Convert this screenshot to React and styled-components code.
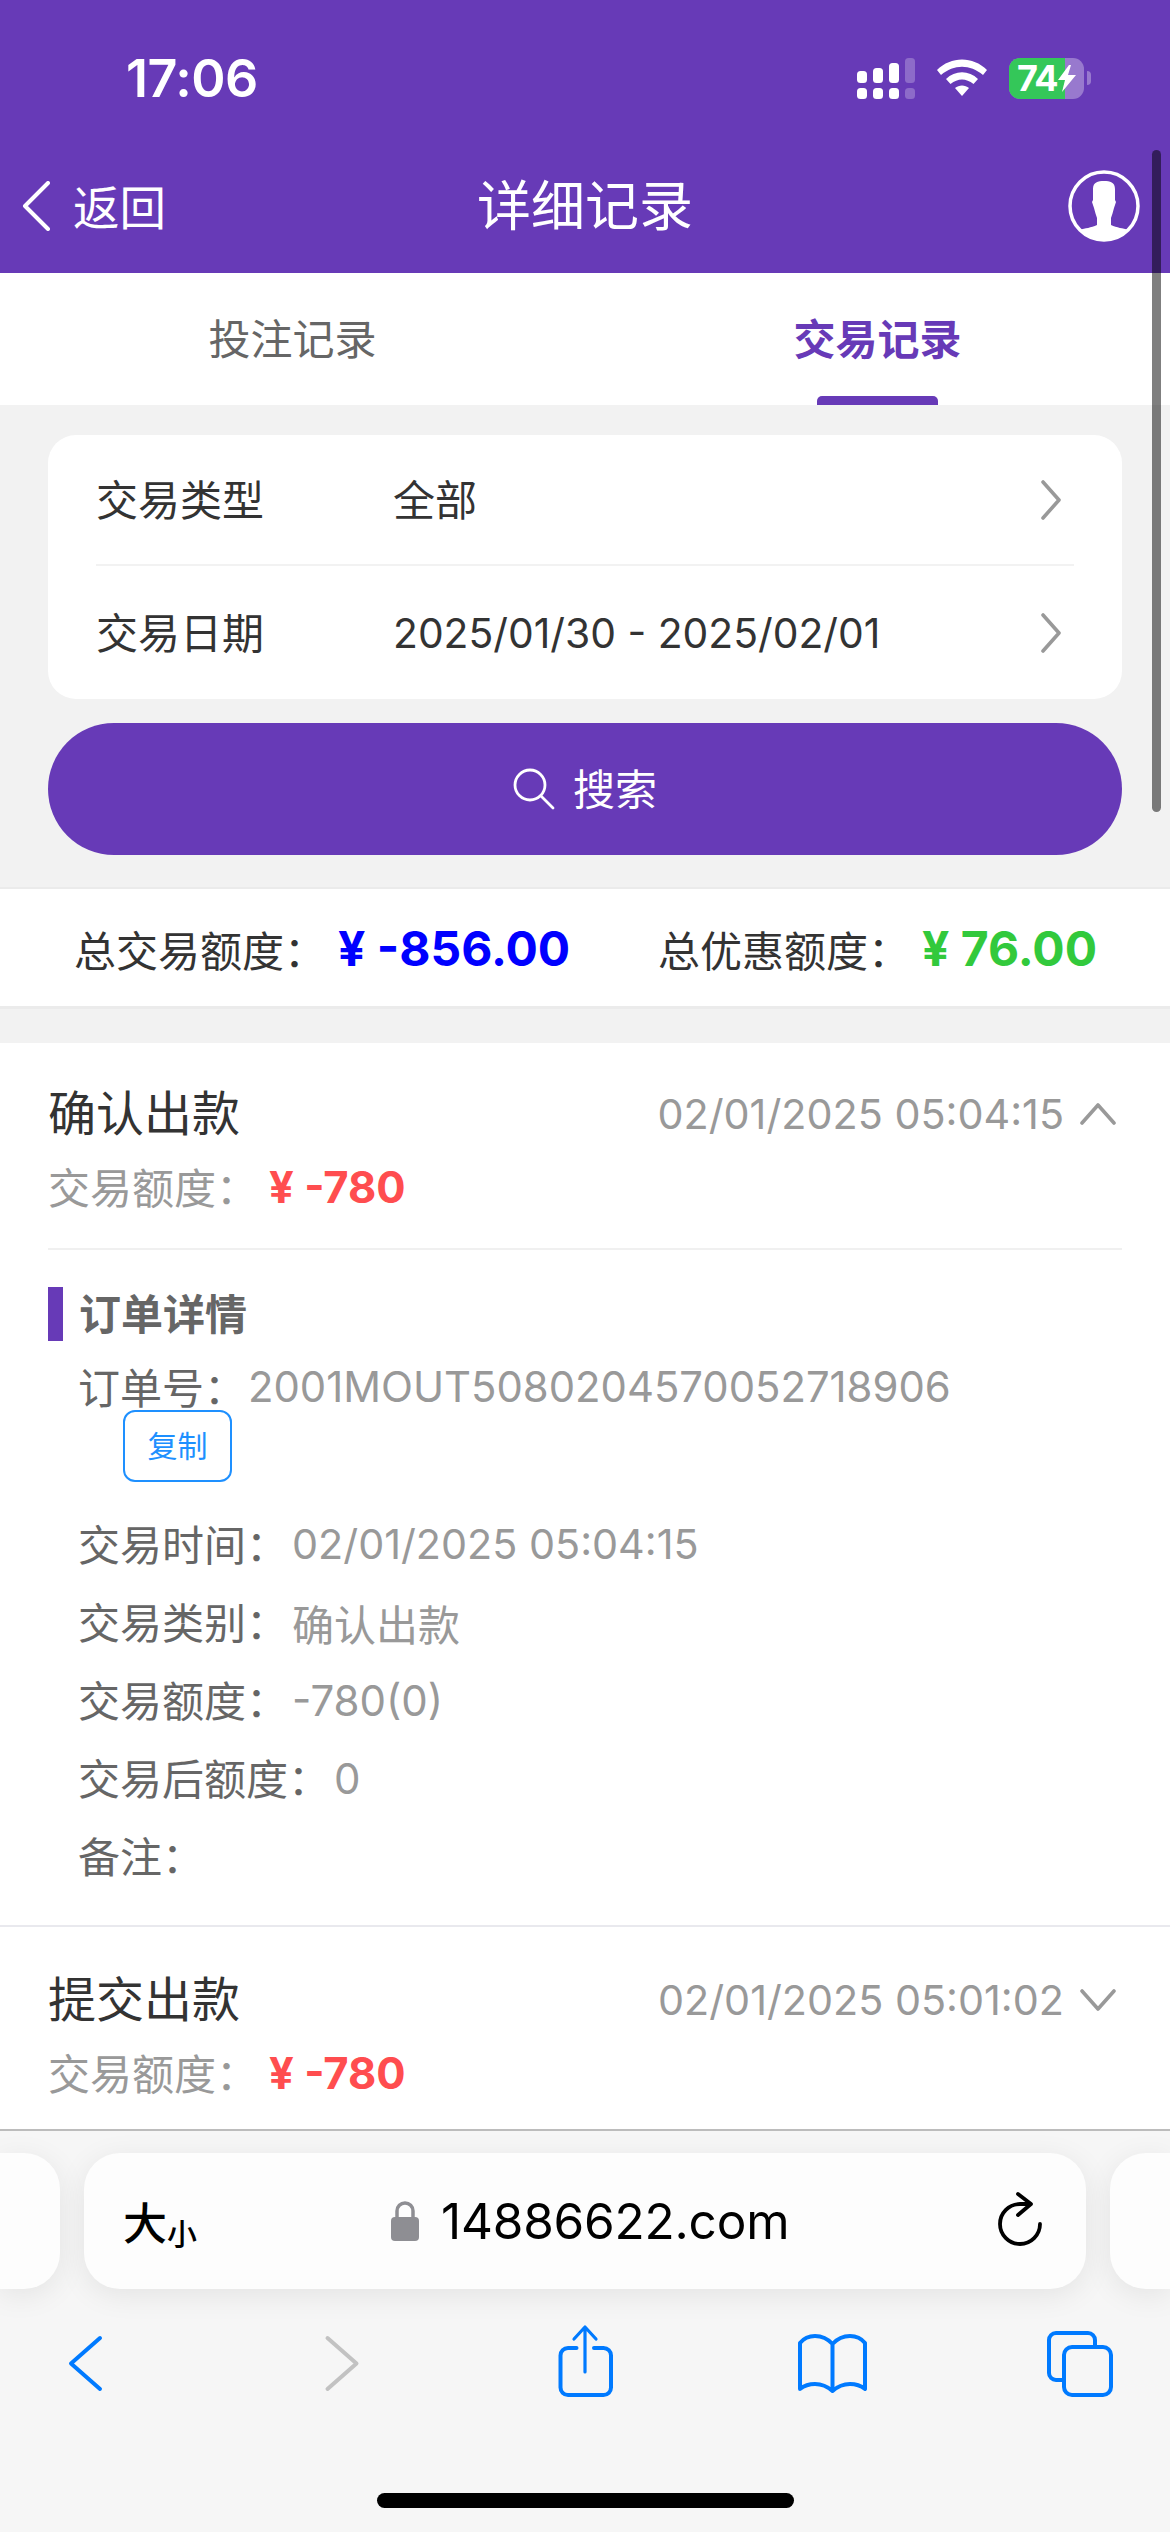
import styled, { createGlobalStyle } from "styled-components";

const PURPLE = "#673ab7";
const BLUE = "#007aff";

const GlobalStyle = createGlobalStyle`
  * { box-sizing: border-box; }
  html, body { margin: 0; padding: 0; background: #f2f2f2; }
  body {
    font-family: Inter, "Noto Sans CJK SC", "Liberation Sans", sans-serif;
    overflow: hidden;
  }
`;

const Phone = styled.div`
  position: relative;
  width: 1170px;
  height: 2532px;
  display: flex;
  flex-direction: column;
  overflow: hidden;
  background: #f2f2f2;
`;

const ScrollThumb = styled.div`
  position: absolute;
  top: 150px;
  left: 1152px;
  width: 9px;
  height: 662px;
  border-radius: 5px;
  background: rgba(0, 0, 0, 0.5);
`;

const Header = styled.header`
  height: 273px;
  flex: none;
  background: ${PURPLE};
  color: #fff;
`;

const StatusBar = styled.div`
  height: 141px;
  padding: 15px 79px 0 126px;
  display: flex;
  align-items: center;
  justify-content: space-between;
`;

const Clock = styled.span`
  font-size: 52px;
  font-weight: 600;
  letter-spacing: -0.5px;
`;

const StatusIcons = styled.div`
  display: flex;
  align-items: center;
  gap: 22px;
`;

const Battery = styled.div`
  position: relative;
  width: 75px;
  height: 41px;
  border-radius: 11px;
  background: rgba(255, 255, 255, 0.32);
  display: flex;
  align-items: center;
`;

const BatteryFill = styled.div`
  width: 56px;
  height: 100%;
  border-radius: 11px 0 0 11px;
  background: #34c759;
  font-size: 36px;
  font-weight: 700;
  line-height: 41px;
  padding-left: 8px;
  letter-spacing: -1.5px;
`;

const BatteryBolt = styled.svg`
  position: absolute;
  left: 48px;
  top: 7px;
`;

const BatteryGroup = styled.div`
  display: flex;
  align-items: center;
  gap: 3px;
`;

const BatteryNub = styled.div`
  width: 4px;
  height: 14px;
  border-radius: 0 4px 4px 0;
  background: rgba(255, 255, 255, 0.32);
`;

const NavBar = styled.nav`
  height: 132px;
  padding: 0 30px 0 22px;
  display: flex;
  align-items: center;
  position: relative;
  margin-top: -1px;
`;

const BackLink = styled.div`
  display: flex;
  align-items: center;
  gap: 23px;
  font-size: 46.5px;
`;

const BackLabel = styled.span`
  padding-bottom: 3px;
`;

const NavTitle = styled.div`
  position: absolute;
  left: 0;
  right: 0;
  text-align: center;
  font-size: 54px;
  padding-bottom: 8px;
`;

const Avatar = styled.svg`
  margin-left: auto;
`;

const Tabs = styled.div`
  height: 132px;
  flex: none;
  display: grid;
  grid-template-columns: 1fr 1fr;
  background: #fff;
`;

const Tab = styled.div`
  position: relative;
  display: flex;
  align-items: center;
  justify-content: center;
  padding-bottom: 6px;
  font-size: 42px;
  font-weight: ${(p) => (p.$active ? 700 : 400)};
  color: ${(p) => (p.$active ? PURPLE : "#666")};

  ${(p) =>
    p.$active &&
    `&::after {
      content: "";
      position: absolute;
      bottom: 0;
      left: 232px;
      width: 121px;
      height: 9px;
      border-radius: 5px 5px 0 0;
      background: ${PURPLE};
    }`}
`;

const Content = styled.main`
  flex: 1;
  min-height: 0;
  overflow: hidden;
`;

const Filters = styled.section`
  padding: 30px 48px 32px;
`;

const FilterCard = styled.div`
  background: #fff;
  border-radius: 28px;
  padding: 0 48px;
`;

const FilterRow = styled.div`
  height: ${(p) => (p.$last ? "133px" : "131px")};
  display: grid;
  grid-template-columns: 297px 1fr 20px;
  align-items: center;
  font-size: 42px;
  color: #333;
  padding-right: 13px;
  width: 978px;
  border-bottom: ${(p) => (p.$last ? "none" : "2px solid #f2f2f2")};
`;

const FilterLabel = styled.span`
  padding-bottom: 5px;
`;

const FilterValue = styled.span`
  font-size: ${(p) => (p.$latin ? "40.8px" : "42px")};
  padding-bottom: ${(p) => (p.$latin ? "0" : "4px")};
`;

const SearchButton = styled.div`
  height: 132px;
  margin-top: 24px;
  border-radius: 66px;
  background: ${PURPLE};
  color: #fff;
  font-size: 42px;
  display: flex;
  align-items: center;
  justify-content: center;
  gap: 18px;
`;

const SearchLabel = styled.span`
  padding-bottom: 5px;
`;

const Summary = styled.section`
  height: 122px;
  background: #fff;
  border-top: 2px solid #ebebeb;
  border-bottom: 3px solid #ebebeb;
  padding: 2px 0 0 74px;
  display: grid;
  grid-template-columns: 584px 1fr;
  align-items: center;
  font-size: 42px;
  color: #333;
`;

const SummaryItem = styled.div`
  display: flex;
  align-items: center;
  gap: 12px;
  white-space: nowrap;
`;

const SummaryValue = styled.span`
  font-size: 48px;
  font-weight: 700;
  color: ${(p) => p.$color};
`;

const Record = styled.article`
  background: #fff;
  margin-top: ${(p) => (p.$first ? "34px" : "0")};
  border-bottom: ${(p) => (p.$divided ? "2px solid #e9e9ee" : "none")};
`;

const RecordHead = styled.div`
  padding: ${(p) => (p.$collapsed ? "35px" : "33px")} 48px 23px;
`;

const RecordTop = styled.div`
  height: 75px;
  display: flex;
  align-items: center;
  justify-content: space-between;
`;

const RecordTitle = styled.span`
  font-size: 48px;
  color: #333;
  padding-bottom: 8px;
`;

const RecordTime = styled.span`
  display: flex;
  align-items: center;
  gap: 16px;
  font-size: 41.3px;
  color: #999;
  margin-right: 6px;
`;

const RecordAmount = styled.div`
  height: 74px;
  display: flex;
  align-items: center;
  gap: 11px;
  font-size: 42px;
  color: #999;
  padding-bottom: 6px;
`;

const AmountValue = styled.span`
  font-size: 43.5px;
  font-weight: 700;
  padding-top: 4px;
  color: #ff4d4f;
`;

const Details = styled.div`
  margin: 0 48px;
  padding: 37px 0 30px;
  border-top: 2px solid #f0f0f0;
`;

const DetailsTitle = styled.div`
  height: 54px;
  border-left: 15px solid ${PURPLE};
  padding: 0 0 6px 16px;
  display: flex;
  align-items: center;
  font-size: 42px;
  font-weight: 700;
  color: #666;
`;

const OrderLine = styled.div`
  height: 46px;
  margin: 23px 0 0 30px;
  padding-bottom: 4px;
  display: flex;
  align-items: center;
  font-size: 42px;
  color: #666;
  white-space: nowrap;
`;

const CopyButton = styled.div`
  width: 109px;
  height: 72px;
  margin: 0 0 23px 75px;
  padding-bottom: 5px;
  border: 2px solid #1e90ff;
  border-radius: 12px;
  color: #1e90ff;
  font-size: 30px;
  display: flex;
  align-items: center;
  justify-content: center;
`;

const DetailRow = styled.div`
  height: 78px;
  margin-left: 30px;
  padding-bottom: 3px;
  display: flex;
  align-items: center;
  font-size: 42px;
  color: #666;
`;

const DetailValue = styled.span`
  margin-left: ${(p) => (p.$size === 41.8 ? "2px" : "4px")};
  padding-top: 3px;
  font-size: ${(p) => p.$size || 42}px;
  color: #999;
`;

const BrowserBar = styled.footer`
  height: 403px;
  flex: none;
  background: #f6f6f6;
  border-top: 2px solid #bcbcbc;
  position: relative;
`;

const PillRow = styled.div`
  padding-top: 22px;
  display: grid;
  grid-template-columns: 60px 1002px 1fr;
  gap: 24px;
`;

const SidePill = styled.div`
  height: 136px;
  background: #fdfdfd;
  border-radius: ${(p) => (p.$right ? "36px 0 0 36px" : "0 36px 36px 0")};
  box-shadow: 0 6px 30px rgba(0, 0, 0, 0.08);
`;

const UrlPill = styled.div`
  height: 136px;
  background: #fdfdfd;
  border-radius: 36px;
  box-shadow: 0 6px 30px rgba(0, 0, 0, 0.08);
  padding: 0 44px 0 39px;
  display: flex;
  align-items: center;
  color: #000;
`;

const TextSize = styled.span`
  font-size: 44px;
  display: flex;
  align-items: flex-end;
  font-weight: 500;
  small {
    font-size: 30px;
    line-height: 1.25;
  }
`;

const UrlText = styled.div`
  margin-left: 194px;
  display: flex;
  align-items: center;
  gap: 22px;
  font-size: 49.5px;
  letter-spacing: -0.2px;
`;

const Reload = styled.svg`
  margin-left: auto;
  overflow: visible;
`;

const ToolRow = styled.div`
  margin-top: 37px;
  padding: 0 55px 0 51px;
  height: 76px;
  display: flex;
  align-items: center;
  justify-content: space-between;
`;

const ToolIcon = styled.svg`
  width: 70px;
  height: 76px;
  overflow: visible;
  fill: none;
  stroke: ${(p) => (p.$muted ? "#c2c2c2" : BLUE)};
  stroke-width: 4;
  stroke-linecap: round;
  stroke-linejoin: round;
`;

const HomeIndicator = styled.div`
  position: absolute;
  left: 377px;
  top: 362px;
  width: 417px;
  height: 15px;
  border-radius: 8px;
  background: #000;
`;

const Chevron = ({ dir, size = 20, color = "#999" }) => {
  const paths = {
    right: "M2 2 L18 20 L2 38",
    up: "M2 21 L18 3 L34 21",
    down: "M2 3 L18 21 L34 3",
  };
  const box = dir === "right" ? "0 0 20 40" : "0 0 36 24";
  const w = dir === "right" ? size : 36;
  const h = dir === "right" ? size * 2 : 24;
  return (
    <svg width={w} height={h} viewBox={box} fill="none">
      <path d={paths[dir]} stroke={color} strokeWidth="3.6" strokeLinecap="round" strokeLinejoin="round" />
    </svg>
  );
};

const Signal = () => (
  <svg width="58" height="41" viewBox="0 0 58 41" fill="#fff">
    <rect x="0" y="13" width="10" height="12" rx="3.5" />
    <rect x="16" y="10" width="10" height="15" rx="3.5" />
    <rect x="32" y="5" width="10" height="20" rx="3.5" />
    <rect x="48" y="0" width="10" height="25" rx="3.5" opacity="0.25" />
    <rect x="0" y="30" width="10" height="11" rx="3.5" />
    <rect x="16" y="30" width="10" height="11" rx="3.5" />
    <rect x="32" y="30" width="10" height="11" rx="3.5" />
    <rect x="48" y="30" width="10" height="11" rx="3.5" opacity="0.25" />
  </svg>
);

const Wifi = () => (
  <svg width="50" height="38" viewBox="0 0 50 38" fill="#fff">
    <path d="M0 11 C14 -3 36 -3 50 11 L46 16 C33 5 17 5 4 16 Z" />
    <path d="M9 20 C18 11 32 11 41 20 L36.500 25 C29 19 21 19 13.500 25 Z" />
    <path d="M18 29 C22 25.500 28 25.500 32 29 L25 37 Z" />
  </svg>
);

const Profile = () => (
  <Avatar width="72" height="72" viewBox="0 0 72 72">
    <defs>
      <clipPath id="avatar-clip">
        <circle cx="36" cy="36" r="34" />
      </clipPath>
    </defs>
    <circle cx="36" cy="36" r="34" fill="none" stroke="#fff" strokeWidth="3.5" />
    <path
      clipPath="url(#avatar-clip)"
      fill="#fff"
      d="M25 19 C25 12 30 11 36 11 C42 11 47 12 47 19 L47 30 L48 32 L46 38 C45 42 44 45 43 48 L43 55 C49 58 55 58 60 60 L60 72 L12 72 L12 60 C17 58 23 58 29 55 L29 48 C28 45 27 42 26 38 L24 32 L25 30 Z"
    />
  </Avatar>
);

const records = [
  ["交易时间：", "02/01/2025 05:04:15", 41.3],
  ["交易类别：", "确认出款"],
  ["交易额度：", "-780(0)"],
  ["交易后额度：", "0"],
  ["备注：", ""],
];

export default function App() {
  return (
    <Phone>
      <GlobalStyle />
      <Header>
        <StatusBar>
          <Clock>17:06</Clock>
          <StatusIcons>
            <Signal />
            <Wifi />
            <BatteryGroup>
              <Battery>
                <BatteryFill>74</BatteryFill>
                <BatteryBolt width="20" height="27" viewBox="0 0 20 27" fill="#fff">
                  <path d="M12 0 L1 15 L8 15 L5 27 L19 10 L11 10 L14 0 Z" />
                </BatteryBolt>
              </Battery>
              <BatteryNub />
            </BatteryGroup>
          </StatusIcons>
        </StatusBar>
        <NavBar>
          <BackLink>
            <svg width="28" height="50" viewBox="0 0 28 50" fill="none">
              <path d="M26 2 L3 25 L26 48" stroke="#fff" strokeWidth="4" strokeLinecap="round" strokeLinejoin="round" />
            </svg>
            <BackLabel>返回</BackLabel>
          </BackLink>
          <NavTitle>详细记录</NavTitle>
          <Profile />
        </NavBar>
      </Header>

      <Tabs>
        <Tab>投注记录</Tab>
        <Tab $active>交易记录</Tab>
      </Tabs>

      <Content>
        <Filters>
          <FilterCard>
            <FilterRow>
              <FilterLabel>交易类型</FilterLabel>
              <FilterValue>全部</FilterValue>
              <Chevron dir="right" />
            </FilterRow>
            <FilterRow $last>
              <FilterLabel>交易日期</FilterLabel>
              <FilterValue $latin>2025/01/30 - 2025/02/01</FilterValue>
              <Chevron dir="right" />
            </FilterRow>
          </FilterCard>
          <SearchButton>
            <svg width="42" height="42" viewBox="0 0 42 42" fill="none">
              <circle cx="17" cy="17" r="15" stroke="#fff" strokeWidth="2.8" />
              <path d="M28 28 L40 40" stroke="#fff" strokeWidth="2.8" strokeLinecap="round" />
            </svg>
            <SearchLabel>搜索</SearchLabel>
          </SearchButton>
        </Filters>

        <Summary>
          <SummaryItem>
            总交易额度：
            <SummaryValue $color="#0000ff">¥ -856.00</SummaryValue>
          </SummaryItem>
          <SummaryItem>
            总优惠额度：
            <SummaryValue $color="#32c93c">¥ 76.00</SummaryValue>
          </SummaryItem>
        </Summary>

        <Record $first $divided>
          <RecordHead>
            <RecordTop>
              <RecordTitle>确认出款</RecordTitle>
              <RecordTime>
                02/01/2025 05:04:15
                <Chevron dir="up" />
              </RecordTime>
            </RecordTop>
            <RecordAmount>
              交易额度：
              <AmountValue>¥ -780</AmountValue>
            </RecordAmount>
          </RecordHead>
          <Details>
            <DetailsTitle>订单详情</DetailsTitle>
            <OrderLine>
              订单号：
              <DetailValue $size={41.8}>2001MOUT5080204570052718906</DetailValue>
            </OrderLine>
            <CopyButton>复制</CopyButton>
            {records.map(([label, value, size]) => (
              <DetailRow key={label}>
                {label}
                <DetailValue $size={size}>{value}</DetailValue>
              </DetailRow>
            ))}
          </Details>
        </Record>

        <Record>
          <RecordHead $collapsed>
            <RecordTop>
              <RecordTitle>提交出款</RecordTitle>
              <RecordTime>
                02/01/2025 05:01:02
                <Chevron dir="down" />
              </RecordTime>
            </RecordTop>
            <RecordAmount>
              交易额度：
              <AmountValue>¥ -780</AmountValue>
            </RecordAmount>
          </RecordHead>
        </Record>
      </Content>

      <BrowserBar>
        <PillRow>
          <SidePill />
          <UrlPill>
            <TextSize>
              大<small>小</small>
            </TextSize>
            <UrlText>
              <svg width="28" height="40" viewBox="0 0 28 40">
                <path d="M6 18 V10 a8 8 0 0 1 16 0 V18" fill="none" stroke="#8e8e93" strokeWidth="3.5" />
                <rect x="0" y="16" width="28" height="24" rx="4" fill="#8e8e93" />
              </svg>
              14886622.com
            </UrlText>
            <Reload width="46" height="56" viewBox="0 0 46 56" fill="none">
              <path d="M33 11 H24 A20 20 0 1 0 44 31" stroke="#000" strokeWidth="3.8" strokeLinecap="round" />
              <path d="M22 1 L35 11 L22 22" stroke="#000" strokeWidth="3.8" strokeLinecap="round" strokeLinejoin="round" />
            </Reload>
          </UrlPill>
          <SidePill $right />
        </PillRow>
        <ToolRow>
          <ToolIcon viewBox="0 0 70 76">
            <path d="M49 12 L20 37.500 L49 63" />
          </ToolIcon>
          <ToolIcon viewBox="0 0 70 76" $muted>
            <path d="M27.500 12 L56.500 37.500 L27.500 63" />
          </ToolIcon>
          <ToolIcon viewBox="0 0 70 76">
            <path d="M28.500 22 H20 a7.500 7.500 0 0 0 -7.500 7.500 V61.500 a7.500 7.500 0 0 0 7.500 7.500 H55.500 a7.500 7.500 0 0 0 7.500 -7.500 V29.500 a7.500 7.500 0 0 0 -7.500 -7.500 H46" />
            <path d="M37 46 V1 M26 13 L37 1 L48 13" strokeWidth="3.2" />
          </ToolIcon>
          <ToolIcon viewBox="0 0 70 76">
            <path d="M35.500 18 C30 12 24 10 18 10 C12 10 7 12 3 17 V63 C8 59 13 58 18 58 C25 58 31 61 35.500 65 C40 61 46 58 53 58 C58 58 63 59 68 63 V17 C64 12 59 10 53 10 C47 10 41 12 35.500 18 Z M35.500 18 V65" />
          </ToolIcon>
          <ToolIcon viewBox="0 0 70 76">
            <path d="M17 54 H11 a7 7 0 0 1 -7 -7 V14 a7 7 0 0 1 7 -7 H43 a7 7 0 0 1 7 7 V21" />
            <rect x="19" y="21" width="47" height="48" rx="8" />
          </ToolIcon>
        </ToolRow>
        <HomeIndicator />
      </BrowserBar>
      <ScrollThumb />
    </Phone>
  );
}
